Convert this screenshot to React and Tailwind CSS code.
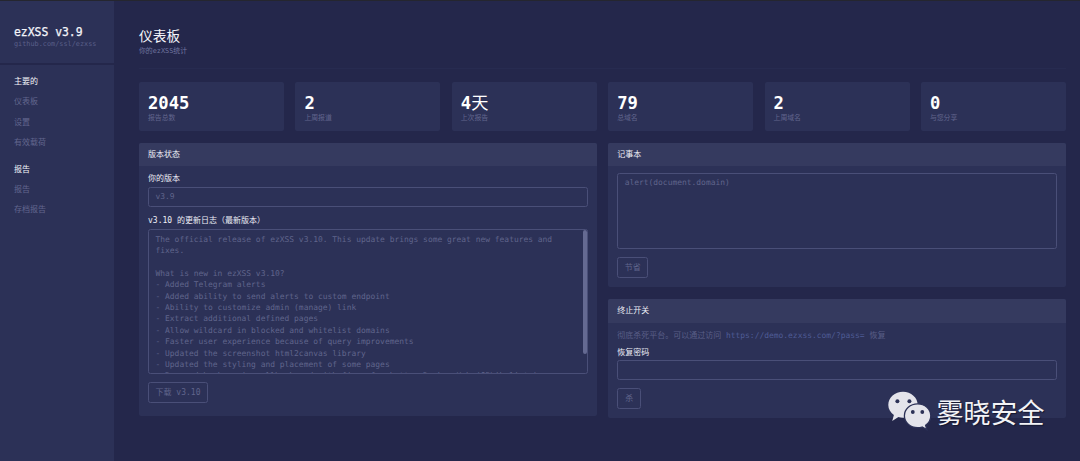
import React from "react";

const stats = [
  ["2045", "", "报告总数"],
  ["2", "", "上周报道"],
  ["4", "天", "上次报告"],
  ["79", "", "总域名"],
  ["2", "", "上周域名"],
  ["0", "", "与您分享"],
];

const changelog = `The official release of ezXSS v3.10. This update brings some great new features and
fixes.

What is new in ezXSS v3.10?
- Added Telegram alerts
- Added ability to send alerts to custom endpoint
- Ability to customize admin (manage) link
- Extract additional defined pages
- Allow wildcard in blocked and whitelist domains
- Faster user experience because of query improvements
- Updated the screenshot html2canvas library
- Updated the styling and placement of some pages
- Removed backups in callback and with fixes for better Docker Hub (GPLib+lists)`;

function NavGroup({ title, items, className }) {
  return (
    <nav className={"flex flex-col " + className}>
      <h2 className="h-5 text-[8px] leading-[11px] text-[#f4f5fa]">{title}</h2>
      {items.map((item) => (
        <a key={item} className="h-[20.5px] text-[8px] leading-[12px] text-[#62668e]">{item}</a>
      ))}
    </nav>
  );
}

function Panel({ title, className, children }) {
  return (
    <section className={"flex flex-col rounded-xs bg-[#2c3157] " + className}>
      <h2 className="h-[23.5px] shrink-0 rounded-t-xs bg-[#353a5f] pl-[9px] text-[8px] leading-[23px] text-[#eceef6]">{title}</h2>
      <div className="flex flex-col items-start px-[9px]">{children}</div>
    </section>
  );
}

function Button({ children, className }) {
  return (
    <button className={"h-[21px] rounded-[2.5px] border border-[#4a4f78] text-center text-[8px] leading-[19px] whitespace-pre text-[#60658c] " + className}>
      {children}
    </button>
  );
}

function Watermark() {
  return (
    <div className="absolute top-[390px] left-[888px] flex items-start text-[#f3f3f6]">
      <svg width="44" height="40" viewBox="0 0 44 40">
        <path d="M15 .8C6.900.800.3 6.600.3 13.900c0 4 2.200 7.600 5.600 10l-1.700 6 6.200-3.800c1.500.4 3.100.6 4.600.6 8.100 0 14.700-5.700 14.700-12.800S23.100.8 15 .8Z" fill="#e4e4eb" />
        <path d="M29.600 12.800c-7.300 0-13.200 5.200-13.200 11.900s5.900 11.900 13.200 11.900c1.600 0 3.100-.2 4.500-.6l4.700 2.600-1.200-4.400c3.100-2.100 5.200-5.500 5.200-9.500 0-6.700-5.900-11.900-13.200-11.900Z" fill="#e4e4eb" stroke="#2c3157" strokeWidth="1.300" />
        <g fill="#2c3157">
          <circle cx="9.400" cy="10.200" r="2" />
          <circle cx="21.400" cy="10.200" r="2" />
          <circle cx="24.800" cy="21" r="1.900" />
          <circle cx="34.300" cy="21" r="1.900" />
        </g>
      </svg>
      <span className="ml-[4.500px] pt-[3px] font-['Noto_Sans_CJK_SC',sans-serif] text-[27px] leading-[36px] whitespace-nowrap [text-shadow:1px_1px_1px_#15172f]">雾晓安全</span>
    </div>
  );
}

export default function App() {
  return (
    <div className="relative flex h-[461px] w-[1080px] overflow-hidden border-t border-[#25262f] bg-[#24274b] font-['DejaVu_Sans_Mono','Noto_Sans_CJK_SC',monospace] text-[7.950px]">
      <aside className="flex w-[114px] shrink-0 flex-col bg-[#2c3157]">
        <header className="h-[64px] shrink-0 border-b-2 border-[#24274b] pt-[24px] pl-[14px]">
          <h1 className="text-[11.400px] leading-[14px] text-[#f4f5fa] [-webkit-text-stroke:0.25px_#f4f5fa]">ezXSS v3.9</h1>
          <p className="text-[6.850px] leading-[11px] text-[#5a5f89]">github.com/ssl/ezxss</p>
        </header>
        <NavGroup title="主要的" items={["仪表板", "设置", "有效载荷"]} className="mt-[11px] pl-[14px]" />
        <NavGroup title="报告" items={["报告", "存档报告"]} className="mt-[6px] pl-[14px]" />
      </aside>
      <main className="flex w-[952px] shrink-0 flex-col pl-[25px]">
        <header className="h-[68px] shrink-0 border-b border-[#272b50] pt-[26px]">
          <h1 className="text-[13.700px] leading-[19px] text-[#f4f5fa]">仪表板</h1>
          <p className="text-[6.850px] leading-[11px] text-[#7276a0]">你的ezXSS统计</p>
        </header>
        <div className="mt-[12.500px] grid grid-cols-6 gap-[11.300px]">
          {stats.map(([value, unit, label], i) => (
            <div key={i} className="h-[49.500px] rounded-xs bg-[#2c3157] pt-[12px] pl-[9px]">
              <div className="flex h-[19px] items-center text-[17.200px] leading-[19px] font-bold text-white">
                {value}<span className="font-normal">{unit}</span>
              </div>
              <div className="text-[6.850px] leading-[10px] text-[#62668e]">{label}</div>
            </div>
          ))}
        </div>
        <div className="mt-[11.500px] grid grid-cols-2 items-start gap-[11.300px]">
          <Panel title="版本状态" className="h-[273.500px]">
            <label className="mt-[7px] text-[8px] leading-[12px] text-[#eceef6]">你的版本</label>
            <div className="mt-[2px] h-[20px] w-full rounded-[2.500px] border border-[#4a4f78] pl-[6.500px] leading-[18px] text-[#60658c]">v3.9</div>
            <label className="mt-[8px] text-[8px] leading-[12px] whitespace-pre text-[#eceef6]">v3.10 的更新日志（最新版本）</label>
            <div className="mt-[2px] flex h-[145px] w-full justify-between overflow-hidden rounded-[2.500px] border border-[#4a4f78]">
              <pre className="pt-[3.500px] pl-[6.500px] font-['DejaVu_Sans_Mono',monospace] leading-[11.400px] text-[#60658c]">{changelog}</pre>
              <div className="h-[124px] w-[3.500px] shrink-0 rounded-xs bg-[#656a92]" />
            </div>
            <Button className="mt-[8px] w-[60px]">下载 v3.10</Button>
          </Panel>
          <div className="flex flex-col gap-[12px]">
            <Panel title="记事本" className="h-[144.500px]">
              <div className="mt-[6.500px] h-[76px] w-full rounded-[2.500px] border border-[#4a4f78] pt-[3.500px] pl-[6.500px] leading-[11.400px] text-[#60658c]">alert(document.domain)</div>
              <Button className="mt-[8.500px] w-[31px]">节省</Button>
            </Panel>
            <Panel title="终止开关" className="h-[119px]">
              <p className="mt-[6px] text-[8px] leading-[13px] whitespace-pre text-[#5a5f87]">彻底杀死平台。可以通过访问 <a className="text-[7.950px] text-[#4f5c96]">https://demo.ezxss.com/?pass=</a> 恢复</p>
              <label className="mt-[5px] text-[8px] leading-[12px] text-[#eceef6]">恢复密码</label>
              <div className="mt-[1.500px] h-[20px] w-full rounded-[2.500px] border border-[#4a4f78]" />
              <Button className="mt-[8px] w-[24px]">杀</Button>
            </Panel>
          </div>
        </div>
      </main>
      <Watermark />
    </div>
  );
}
